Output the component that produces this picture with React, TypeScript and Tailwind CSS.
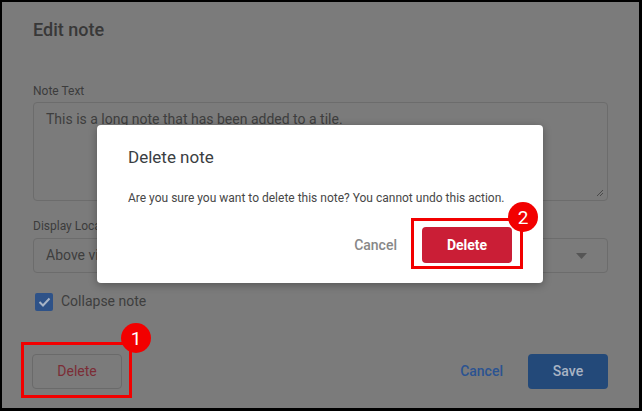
import React from "react";

// annotation marker (red numbered dot)
function Badge({ n, className }: { n: number; className: string }) {
  return (
    <div
      className={`absolute w-[30px] h-[30px] rounded-full bg-[#f20000] text-white text-[19px] leading-none flex items-center justify-center ${className}`}
    >
      {n}
    </div>
  );
}

export default function App() {
  return (
    <div className="w-[642px] h-[411px] bg-black pt-[2px] pl-[2px] pr-[3px] pb-[3px] font-['Roboto','Liberation_Sans',sans-serif]">
      <div className="relative h-full bg-[#7b7b7b] px-[31px] pt-[16px] flex flex-col">
        {/* Edit note form (dimmed behind the modal) */}
        <h2 className="text-[18px] leading-[24px] font-medium text-[#383838]">Edit note</h2>

        <label className="mt-[41px] text-[12px] leading-[16px] text-[#3c3c3c]">Note Text</label>
        <div className="relative mt-[3px] h-[99px] rounded-[4px] border border-[#6c6c6c] px-[12px] pt-[6px] text-[14px] leading-[20px] text-[#3e3e3e]">
          This is a long note that has been added to a tile.
          <svg className="absolute right-[3px] bottom-[3px]" width="8" height="8" viewBox="0 0 8 8">
            <path d="M7 1L1 7M7 4L4 7" stroke="#4a4a4a" strokeWidth="1" />
          </svg>
        </div>

        <label className="mt-[17px] text-[12px] leading-[16px] text-[#3c3c3c]">Display Location</label>
        <div className="mt-[4px] h-[35px] rounded-[4px] border border-[#6c6c6c] pl-[12px] pr-[20px] flex items-center justify-between text-[14px] text-[#3e3e3e]">
          <span>Above visualization</span>
          <svg width="11" height="6" viewBox="0 0 11 6">
            <path d="M0 0h11L5.5 6z" fill="#555" />
          </svg>
        </div>

        <div className="mt-[18px] flex items-center gap-[8px] pl-[2px]">
          <div className="w-[18px] h-[18px] rounded-[2px] bg-[#2e5288] flex items-center justify-center">
            <svg width="13" height="10" viewBox="0 0 13 10">
              <path d="M1.5 5l3.5 3.5L11.5 1.5" stroke="#a7b4c6" strokeWidth="2" fill="none" />
            </svg>
          </div>
          <span className="text-[14px] text-[#3e3e3e]">Collapse note</span>
        </div>

        <div className="mt-[42px] flex items-center">
          <button className="ml-[-1px] w-[90px] h-[35px] rounded-[4px] border border-[#6a6a6a] text-[14px] text-[#7c2d36]">
            Delete
          </button>
          <div className="ml-auto flex items-center gap-[25px]">
            <button className="text-[14px] font-medium text-[#2b5391]">Cancel</button>
            <button className="w-[80px] h-[35px] rounded-[4px] bg-[#234979] text-[14px] font-medium text-[#a9b4c4]">
              Save
            </button>
          </div>
        </div>

        {/* Confirm modal */}
        <div className="absolute left-[95px] top-[123px] w-[446px] h-[158px] rounded-[4px] bg-white shadow-[0_2px_8px_rgba(0,0,0,0.3)] px-[31px] pt-[21px] flex flex-col">
          <h3 className="text-[17px] leading-[22px] text-[#3a3e42]">Delete note</h3>
          <p className="mt-[22px] text-[12px] leading-[16px] text-[#474747]">
            Are you sure you want to delete this note? You cannot undo this action.
          </p>
          <div className="mt-[21px] flex items-center justify-end gap-[25px]">
            <button className="text-[14px] font-medium text-[#888888]">Cancel</button>
            <button className="w-[90px] h-[36px] rounded-[4px] bg-[#ca1e36] text-[14px] font-bold text-white">
              Delete
            </button>
          </div>
        </div>

        {/* annotations */}
        <div className="absolute left-[19px] top-[340px] w-[111px] h-[56px] border-[3px] border-[#f20000]" />
        <Badge n={1} className="left-[119px] top-[321px]" />
        <div className="absolute left-[409px] top-[216px] w-[112px] h-[51px] border-[3px] border-[#f20000]" />
        <Badge n={2} className="left-[506px] top-[200px]" />
      </div>
    </div>
  );
}
